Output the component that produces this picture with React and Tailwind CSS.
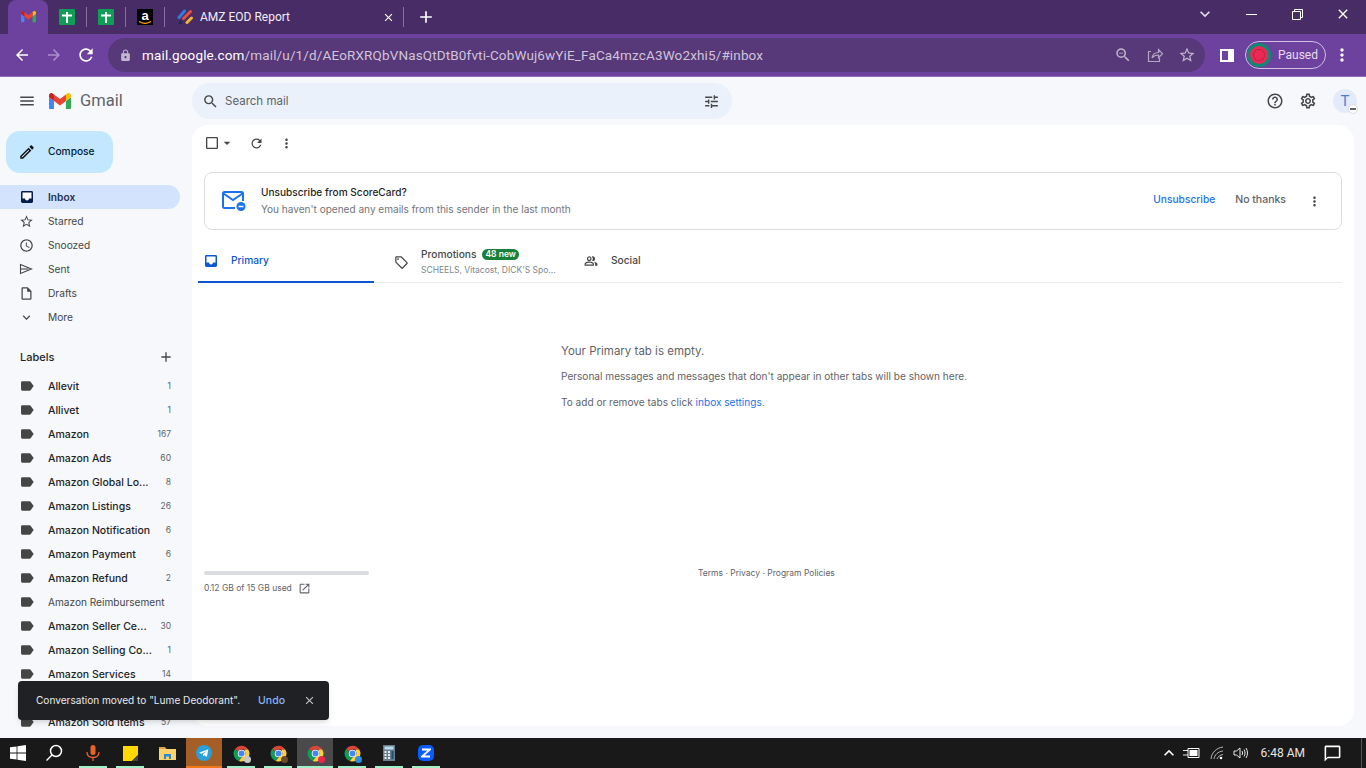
import React from "react";
import {
  MdAdd, MdArrowBack, MdArrowDropDown, MdArrowForward, MdCheckBoxOutlineBlank, MdClose, MdOutlineEdit,
  MdExpandMore, MdHelpOutline, MdLabel, MdLock, MdMenu, MdMoreVert, MdOpenInNew, MdOutlineAccessTime,
  MdOutlineInsertDriveFile, MdOutlineLocalOffer, MdOutlinePeopleAlt, MdOutlineSettings, MdRefresh,
  MdSearch, MdStarBorder, MdTune, MdZoomOut, MdKeyboardArrowUp, MdOutlineChatBubbleOutline,
} from "react-icons/md";

/* ---------- Logos ---------- */
const GmailLogo = ({ size = 22 }) => (
  <svg width={size} height={(size * 18) / 24} viewBox="0 0 24 18">
    <path fill="#4285f4" d="M1.6 18h3.8V8.8L0 4.7v11.7C0 17.3.7 18 1.6 18z" />
    <path fill="#34a853" d="M18.5 18h3.9c.9 0 1.6-.7 1.6-1.6V4.7l-5.5 4.1z" />
    <path fill="#fbbc04" d="M18.5 1.7v7.1L24 4.7V2.5c0-2-2.3-3.2-3.9-2z" />
    <path fill="#ea4335" d="M5.4 8.8V1.7L12 6.6l6.5-4.9v7.1L12 13.7z" />
    <path fill="#c5221f" d="M0 2.5v2.2l5.4 4.1V1.7L3.9.5C2.3-.7 0 .5 0 2.5z" />
  </svg>
);

const SheetIcon = () => (
  <div className="w-4 h-4 rounded-[1px] bg-[#0f9d58] flex items-center justify-center">
    <svg width="10" height="12" viewBox="0 0 10 12">
      <path fill="#fff" d="M4 1h2v2.500h4v2H6V12H4V5.500H0v-2h4z" />
    </svg>
  </div>
);

const AmazonIcon = () => (
  <div className="w-4 h-4 bg-black flex flex-col items-center overflow-hidden">
    <span className="text-white text-[13px] leading-[13px] font-bold font-['Liberation_Sans',sans-serif]">a</span>
    <svg width="14" height="3" viewBox="0 0 14 3" className="-mt-[1px]">
      <path d="M1 0.5c4 2.5 8 2.5 12 0" stroke="#f90" strokeWidth="1.3" fill="none" />
    </svg>
  </div>
);

const ReportLogo = () => (
  <svg width="16" height="16" viewBox="0 0 16 16">
    <path stroke="#2f7de1" strokeWidth="3" strokeLinecap="round" d="M2 8.5 7.5 2" />
    <path stroke="#e8503a" strokeWidth="3" strokeLinecap="round" d="M6.5 9.5 13.5 2.5" />
    <path stroke="#f5b335" strokeWidth="3" strokeLinecap="round" d="M10 13.5 14.5 9" />
    <path fill="#1c2a5a" d="M1 15l2.5-4L6 15z" />
  </svg>
);

const ChromeIcon = ({ badge }) => (
  <div className="relative w-[17px] h-[17px]">
    <svg width="17" height="17" viewBox="0 0 24 24">
      <path fill="#db4437" d="M12 1a11 11 0 0 1 9.5 5.5H12a5.5 5.5 0 0 0-5 3.2L3.2 5.2A11 11 0 0 1 12 1z" />
      <path fill="#0f9d58" d="M3.2 5.2 7 9.7a5.5 5.5 0 0 0 5 7.8l-3.6 5A11 11 0 0 1 3.2 5.2z" />
      <path fill="#ffcd40" d="M21.5 6.5A11 11 0 0 1 8.4 22.5l3.6-5a5.5 5.5 0 0 0 4.6-8.5l-.3-2.5z" />
      <circle cx="12" cy="12" r="5.4" fill="#fff" />
      <circle cx="12" cy="12" r="4.2" fill="#4285f4" />
    </svg>
    {badge && <span className={`absolute -right-[1px] -bottom-[1px] w-[7px] h-[7px] rounded-full ${badge}`} />}
  </div>
);

const Watermelon = () => (
  <div className="w-6 h-6 rounded-full bg-[#0d8a72] flex items-center justify-center">
    <div className="w-[18px] h-[18px] rounded-full bg-[#ea2a55] flex items-center justify-center">
      <div className="w-[12px] h-[12px] rounded-full border border-dotted border-[#8a1538]" />
    </div>
  </div>
);

const ShareIcon = () => (
  <svg width="18" height="18" viewBox="0 0 18 18" fill="none" stroke="#b3a5c4" strokeWidth="1.2">
    <path d="M5 5.5H2.5v10h11V12" />
    <path d="M6 12c.5-3.5 3-5.5 6.5-5.5V3.5l4 4.2-4 4V9C9.5 9 7.500 10 6 12z" />
  </svg>
);

const InboxFilled = ({ color, size = 16 }) => (
  <svg width={size} height={size} viewBox="0 0 16 16">
    <rect x="2" y="2" width="12" height="12" rx="1.4" fill={color} />
    <path fill="#fff" d="M3.500 3.500h9v6H10a2 2 0 0 1-4 0H3.500z" />
  </svg>
);

const SendOutline = () => (
  <svg width="14" height="14" viewBox="0 0 14 14" fill="none" stroke="#444746" strokeWidth="1.1">
    <path d="M1.500 2.500 12.500 7 1.500 11.500z" />
    <path d="M1.500 7h8" />
  </svg>
);

const UnsubIcon = () => (
  <svg width="26" height="22" viewBox="0 0 26 22" fill="none">
    <path stroke="#1a73e8" strokeWidth="2" d="M14 18H3.500A1.500 1.500 0 0 1 2 16.500v-13A1.500 1.500 0 0 1 3.500 2h17A1.500 1.500 0 0 1 22 3.500V11" />
    <path stroke="#1a73e8" strokeWidth="2" d="M2.500 3.500 12 10l9.500-6.500" />
    <circle cx="20" cy="16.500" r="4.500" fill="#1a73e8" />
    <path stroke="#fff" strokeWidth="1.500" d="M17.500 16.500h5" />
  </svg>
);

/* ---------- Taskbar icons ---------- */
const WindowsIcon = () => (
  <svg width="16" height="16" viewBox="0 0 16 16">
    <path fill="#fff" d="M0 2.300 6.600 1.400v6.200H0zM7.400 1.300 16 0v7.600H7.400zM0 8.400h6.600v6.200L0 13.700zM7.400 8.400H16V16l-8.600-1.200z" />
  </svg>
);

const SearchTask = () => (
  <svg width="18" height="18" viewBox="0 0 18 18" fill="none" stroke="#fff" strokeWidth="1.500">
    <circle cx="11" cy="7" r="5.500" />
    <path d="M7 11 1.500 16.500" />
  </svg>
);

const MicIcon = () => (
  <svg width="14" height="18" viewBox="0 0 14 18" fill="none">
    <rect x="4.500" y="1" width="5" height="10" rx="2.500" fill="#e8622a" />
    <path stroke="#e8622a" strokeWidth="1.300" d="M1 8c0 3.500 2.500 5.500 6 5.500s6-2 6-5.500M7 13.500V17" />
  </svg>
);

const StickyIcon = () => (
  <svg width="15" height="15" viewBox="0 0 15 15">
    <path fill="#ffd800" d="M0 0h15v9l-6 6H0z" />
    <path fill="#444" d="M15 9v6H9z" />
  </svg>
);

const FolderIcon = () => (
  <svg width="17" height="15" viewBox="0 0 17 15">
    <path fill="#d9a441" d="M0 1h6l1.500 2H0z" />
    <path fill="#fcd36a" d="M0 3h17v11H0z" />
    <path fill="#2b88d8" d="M5 8h7v5h-2v-2.500H7V13H5z" />
  </svg>
);

const TelegramIcon = () => (
  <svg width="16" height="16" viewBox="0 0 16 16">
    <circle cx="8" cy="8" r="8" fill="#2a9fd8" />
    <path fill="#fff" d="M3 7.800 12.300 4.200 10.900 12 8.400 10.200 7 11.500 6.800 9.300 11 5.600 5.600 8.800z" />
  </svg>
);

const CalcIcon = () => (
  <svg width="12" height="16" viewBox="0 0 12 16">
    <rect width="12" height="16" fill="#6b7c8c" />
    <rect x="1.500" y="1.500" width="9" height="3" fill="#b8dcf0" />
    <path fill="#e6edf2" d="M1.500 6h2v2h-2zM5 6h2v2H5zM1.500 9h2v2h-2zM5 9h2v2H5zM1.500 12h2v2h-2zM5 12h2v2H5z" />
    <rect x="8.500" y="6" width="2" height="8" fill="#20506f" />
  </svg>
);

const ZoomIcon = () => (
  <div className="w-4 h-4 rounded-[5px] bg-[#0b5cff] flex items-center justify-center">
    <svg width="10" height="10" viewBox="0 0 10 10">
      <path fill="none" stroke="#fff" strokeWidth="1.800" d="M1 1.500h8L1 8.500h8" />
    </svg>
  </div>
);

const BatteryPlug = () => (
  <svg width="18" height="12" viewBox="0 0 18 12" fill="none" stroke="#fff">
    <path d="M5 1.500h11v9H5z" />
    <rect x="6.500" y="3" width="8" height="6" fill="#fff" stroke="none" />
    <path d="M0 3.500h5M0 8h5" strokeWidth="0.900" />
  </svg>
);

const WifiIcon = () => (
  <svg width="14" height="14" viewBox="0 0 14 14" fill="none" stroke="#c8c8c8" strokeWidth="0.900">
    <path d="M1 13C1.500 7 6 2 13 1M4 13c.5-4 4-7.500 9-8M7 13c.5-2 3-4 6-4.500" />
    <circle cx="11" cy="12" r="1.300" fill="#fff" stroke="none" />
  </svg>
);

const VolumeIcon = () => (
  <svg width="16" height="14" viewBox="0 0 16 14" fill="none" stroke="#fff" strokeWidth="0.900">
    <path d="M1 5v4h2.500L7 12V2L3.500 5z" />
    <path d="M9 5c.8 1.200.8 2.800 0 4M11 3.500c1.400 2 1.400 5 0 7M13 2c2 3 2 7 0 10" />
  </svg>
);

/* ---------- Data ---------- */
const nav = [
  { name: "Inbox", icon: <InboxFilled color="#041e49" />, active: true },
  { name: "Starred", icon: <MdStarBorder size={15} color="#444746" /> },
  { name: "Snoozed", icon: <MdOutlineAccessTime size={15} color="#444746" /> },
  { name: "Sent", icon: <SendOutline /> },
  { name: "Drafts", icon: <MdOutlineInsertDriveFile size={15} color="#444746" /> },
  { name: "More", icon: <MdExpandMore size={15} color="#444746" /> },
];

const labels = [
  ["Allevit", "1"],
  ["Allivet", "1"],
  ["Amazon", "167"],
  ["Amazon Ads", "60"],
  ["Amazon Global Lo...", "8"],
  ["Amazon Listings", "26"],
  ["Amazon Notification", "6"],
  ["Amazon Payment", "6"],
  ["Amazon Refund", "2"],
  ["Amazon Reimbursement", "", true],
  ["Amazon Seller Ce...", "30"],
  ["Amazon Selling Co...", "1"],
  ["Amazon Services", "14"],
  ["", ""], // this row sits under the toast
  ["Amazon Sold Items", "57"],
];

const taskItems = [
  { icon: <MicIcon />, bar: "left-[4px] right-[4px] bg-[#a0f0c8]" },
  { icon: <StickyIcon />, bar: "left-[4px] right-[4px] bg-[#a0f0c8]" },
  { icon: <FolderIcon /> },
  { icon: <TelegramIcon />, cls: "bg-[#a55e26]", bar: "left-0 right-0 bg-[#f07818]" },
  { icon: <ChromeIcon badge="bg-[#c9c9c9]" />, bar: "left-[4px] right-[4px] bg-[#a0f0c8]" },
  { icon: <ChromeIcon badge="bg-[#6b4a2a]" />, bar: "left-[4px] right-[4px] bg-[#a0f0c8]" },
  { icon: <ChromeIcon badge="bg-[#e8274f]" />, cls: "bg-[#4a4a4a]", bar: "left-0 right-0 bg-[#a0f0c8]" },
  { icon: <ChromeIcon badge="bg-[#2a8fe0]" />, bar: "left-[4px] right-[4px] bg-[#a0f0c8]" },
  { icon: <CalcIcon />, bar: "left-[4px] right-[4px] bg-[#a0f0c8]" },
  { icon: <ZoomIcon />, bar: "left-[4px] right-[4px] bg-[#a0f0c8]" },
];

/* ---------- Sections ---------- */
const TabBar = () => (
  <div className="h-[34px] bg-[#472c66] flex items-stretch pl-[8px] text-white">
    <div className="w-[40px] bg-[#6d429f] rounded-t-[8px] flex items-center justify-center">
      <GmailLogo size={15} />
    </div>
    <div className="w-[38px] flex items-center justify-center"><SheetIcon /></div>
    <div className="w-[1px] h-[20px] mt-[7px] bg-[#86709f]" />
    <div className="w-[38px] flex items-center justify-center"><SheetIcon /></div>
    <div className="w-[1px] h-[20px] mt-[7px] bg-[#86709f]" />
    <div className="w-[38px] flex items-center justify-center"><AmazonIcon /></div>
    <div className="w-[1px] h-[20px] mt-[7px] bg-[#86709f]" />
    <div className="w-[238px] flex items-center pl-[12px]">
      <ReportLogo />
      <span className="ml-[7px] text-[12px] text-[#f1ecf6]">AMZ EOD Report</span>
      <MdClose size={13} className="ml-auto mr-[8px]" />
    </div>
    <div className="w-[1px] h-[20px] mt-[7px] bg-[#86709f]" />
    <div className="w-[44px] flex items-center justify-center"><MdAdd size={20} /></div>
    <div className="ml-auto flex items-center pb-[6px]">
      <div className="w-[46px] flex justify-center"><MdExpandMore size={20} className="text-[#e4dcec]" /></div>
      <div className="w-[46px] flex justify-center">
        <div className="w-[11px] h-[1px] bg-white" />
      </div>
      <div className="w-[46px] flex justify-center">
        <svg width="11" height="11" viewBox="0 0 11 11" fill="none" stroke="#fff">
          <path d="M.5 2.500h8v8h-8zM2.500 2.500v-2h8v8h-2" />
        </svg>
      </div>
      <div className="w-[46px] flex justify-center"><MdClose size={16} /></div>
    </div>
  </div>
);

const AddressBar = () => (
  <div className="h-[43px] bg-[#6d429f] border-b border-[#8f6db8] flex items-center">
    <div className="w-[108px] flex items-center text-white">
      <div className="w-[44px] flex justify-center"><MdArrowBack size={18} /></div>
      <div className="w-[20px] flex justify-center"><MdArrowForward size={18} className="text-[#ab90ca]" /></div>
      <div className="w-[44px] flex justify-center"><MdRefresh size={20} /></div>
    </div>
    <div className="w-[1097px] h-[34px] rounded-full bg-[#573878] flex items-center pl-[11px] pr-[9px]">
      <MdLock size={13} className="text-[#c2b5d0]" />
      <span className="ml-[10px] text-[13.5px] tracking-[0.14px] text-[#cfc4da]">
        <span className="text-white">mail.google.com</span>/mail/u/1/d/AEoRXRQbVNasQtDtB0fvti-CobWuj6wYiE_FaCa4mzcA3Wo2xhi5/#inbox
      </span>
      <div className="ml-auto flex items-center gap-[14px] text-[#c2b5d0]">
        <MdZoomOut size={18} />
        <ShareIcon />
        <MdStarBorder size={18} />
      </div>
    </div>
    <div className="ml-[15px] w-[14px] h-[13px] border-[2px] border-white border-r-[6px] bg-transparent" />
    <div className="ml-[11px] w-[81px] h-[28px] rounded-full border border-[#cfc0e4] flex items-center pl-[1px]">
      <Watermelon />
      <span className="ml-[7px] text-[12px] text-[#e6dcf2]">Paused</span>
    </div>
    <MdMoreVert size={20} className="ml-[6px] text-white" />
  </div>
);

const GmailHeader = () => (
  <div className="h-[48px] flex items-center">
    <div className="w-[192px] flex items-center">
      <MdMenu size={18} className="ml-[18px] text-[#444746]" />
      <div className="ml-[13px]"><GmailLogo /></div>
      <span className="ml-[9px] text-[16.5px] text-[#5f6368]">Gmail</span>
    </div>
    <div className="w-[540px] h-[36px] rounded-full bg-[#eaf1fb] flex items-center pl-[10px] pr-[12px]">
      <MdSearch size={17} className="text-[#444746]" />
      <span className="ml-[6px] mt-[1px] text-[11.5px] text-[#5f6368] font-['Inter',sans-serif]">Search mail</span>
      <MdTune size={17} className="ml-auto text-[#444746]" />
    </div>
    <div className="ml-auto flex items-center pr-[9px]">
      <MdHelpOutline size={18} className="text-[#444746]" />
      <MdOutlineSettings size={18} className="ml-[15px] text-[#444746]" />
      <div className="relative ml-[16px] w-[24px] h-[24px] rounded-full bg-[#e3ebfa] flex items-center justify-center">
        <span className="text-[15px] text-[#4a7fd8]">T</span>
        <span className="absolute -right-[1px] -bottom-[1px] w-[10px] h-[10px] rounded-full bg-white border border-[#dadce0] flex items-center justify-center">
          <span className="w-[6px] h-[2px] bg-[#5f6368]" />
        </span>
      </div>
    </div>
  </div>
);

const Sidebar = () => (
  <aside className="w-[192px] shrink-0 h-[613px] overflow-hidden font-['Inter',sans-serif]">
    <div className="ml-[6px] mt-[6px] w-[107px] h-[42px] rounded-[14px] bg-[#c2e7ff] flex items-center pl-[12px]">
      <MdOutlineEdit size={18} className="text-[#111]" />
      <span className="ml-[12px] mb-[1px] text-[10.2px] font-medium text-[#001d35]">Compose</span>
    </div>
    <nav className="mt-[12px]">
      {nav.map((item) => (
        <div
          key={item.name}
          className={`w-[180px] h-[24px] rounded-r-full flex items-center ${item.active ? "bg-[#d3e3fd]" : ""}`}
        >
          <div className="w-[48px] pl-[19px] flex items-center">{item.icon}</div>
          <span className={`mt-[1px] text-[10.2px] ${item.active ? "font-semibold text-[#1f3050]" : "text-[#444746]"}`}>{item.name}</span>
        </div>
      ))}
    </nav>
    <div className="mt-[12px] h-[32px] w-[180px] flex items-center justify-between pl-[20px] pr-[6px]">
      <span className="text-[11px] font-medium text-[#1f1f1f]">Labels</span>
      <MdAdd size={16} className="text-[#444746]" />
    </div>
    <ul className="mt-[1px]">
      {labels.map(([name, count, read], i) => (
        <li key={i} className="w-[180px] h-[24px] flex items-center">
          <div className="w-[48px] pl-[20px]"><MdLabel size={16} className="-ml-[1px] text-[#444746]" /></div>
          <span className={`mt-[1px] whitespace-nowrap ${read ? "text-[10.1px] text-[#444746]" : "text-[10.5px] font-medium text-[#1f1f1f]"}`}>{name}</span>
          <span className="ml-auto mt-[1px] pr-[9px] text-[8.5px] text-[#5f6368]">{count}</span>
        </li>
      ))}
    </ul>
  </aside>
);

const Tabs = () => (
  <div className="ml-[6px] mr-[12px] h-[46px] border-b border-[#e8eaed] flex">
    <div className="relative w-[176px] flex items-center pl-[5px] pt-[3px]">
      <InboxFilled color="#0b57d0" />
      <span className="ml-[12px] text-[10.2px] font-medium text-[#0b57d0]">Primary</span>
      <div className="absolute left-0 right-0 -bottom-[1px] h-[2px] bg-[#0b57d0]" />
    </div>
    <div className="w-[199px] flex items-center pl-[20px] pt-[5px]">
      <MdOutlineLocalOffer size={15} className="text-[#444746]" />
      <div className="ml-[12px]">
        <div className="flex items-center">
          <span className="text-[10.2px] font-medium text-[#444746]">Promotions</span>
          <span className="ml-[6px] h-[11px] px-[3px] rounded-full bg-[#188038] text-white text-[8.5px] leading-[11px] font-semibold">48 new</span>
        </div>
        <div className="mt-[2px] text-[8.5px] text-[#80868b]">SCHEELS, Vitacost, DICK'S Spo...</div>
      </div>
    </div>
    <div className="flex items-center pl-[11px] pt-[3px]">
      <MdOutlinePeopleAlt size={14} className="text-[#444746]" />
      <span className="ml-[13px] text-[10.2px] font-medium text-[#444746]">Social</span>
    </div>
  </div>
);

const MainPanel = () => (
  <main className="flex-1 mr-[12px] h-[601px] bg-white rounded-[16px] overflow-hidden font-['Inter',sans-serif]">
    <div className="h-[36px] flex items-center pl-[12px] text-[#444746]">
      <MdCheckBoxOutlineBlank size={16} />
      <MdArrowDropDown size={16} className="-ml-[1px]" />
      <MdRefresh size={15} className="ml-[14px]" />
      <MdMoreVert size={15} className="ml-[15px]" />
    </div>
    <div className="mt-[11px] mx-[12px] h-[58px] border border-[#dadce0] rounded-[8px] flex items-center pl-[16px] pr-[19px]">
      <UnsubIcon />
      <div className="ml-[14px]">
        <div className="text-[10.1px] font-medium text-[#1f1f1f]">Unsubscribe from ScoreCard?</div>
        <div className="mt-[2px] text-[10.05px] text-[#70757a]">You haven't opened any emails from this sender in the last month</div>
      </div>
      <span className="ml-auto mb-[3px] text-[10.2px] font-medium text-[#1a73e8]">Unsubscribe</span>
      <span className="ml-[20px] mb-[3px] text-[10.5px] font-medium text-[#5f6368]">No thanks</span>
      <MdMoreVert size={15} className="ml-[21px] text-[#444746]" />
    </div>
    <div className="mt-[7px]"><Tabs /></div>
    <div className="h-[288px] pl-[369px] pt-[60px]">
      <div className="text-[11.5px] text-[#5f6368]">Your Primary tab is empty.</div>
      <div className="mt-[9px] text-[10.08px] text-[#5f6368]">
        Personal messages and messages that don't appear in other tabs will be shown here.
      </div>
      <div className="mt-[11px] text-[10.08px] text-[#5f6368]">
        To add or remove tabs click <span className="text-[#1a73e8]">inbox settings</span>.
      </div>
    </div>
    <div className="pl-[12px] flex items-start">
      <div className="w-[165px]">
        <div className="h-[4px] rounded-full bg-[#dadce0]" />
        <div className="mt-[7px] flex items-center">
          <span className="text-[8.5px] text-[#5f6368]">0.12 GB of 15 GB used</span>
          <MdOpenInNew size={13} className="ml-[6px] text-[#5f6368]" />
        </div>
      </div>
      <div className="ml-[329px] -mt-[4px] text-[8.5px] text-[#5f6368]">Terms · Privacy · Program Policies</div>
    </div>
  </main>
);

const Toast = () => (
  <div className="absolute left-[18px] bottom-[48px] w-[311px] h-[39px] bg-[#202124] rounded-[4px] shadow-md flex items-center pl-[18px] pr-[13px] font-['Inter',sans-serif]">
    <span className="text-[10.1px] text-[#e8eaed]">Conversation moved to "Lume Deodorant".</span>
    <span className="ml-auto text-[10.5px] font-medium text-[#8ab4f8]">Undo</span>
    <MdClose size={13} className="ml-[18px] text-[#c4c7c5]" />
  </div>
);

const Taskbar = () => (
  <footer className="h-[30px] bg-[#191919] flex items-stretch text-white">
    <div className="w-[36px] flex items-center justify-center"><WindowsIcon /></div>
    <div className="w-[39px] pr-[3px] flex items-center justify-center"><SearchTask /></div>
    {taskItems.map((item, i) => (
      <div key={i} className={`relative w-[36px] mr-[1px] flex items-center justify-center ${item.cls || ""}`}>
        {item.icon}
        {item.bar && <div className={`absolute bottom-0 h-[2px] ${item.bar}`} />}
      </div>
    ))}
    <div className="ml-auto flex items-center">
      <MdKeyboardArrowUp size={20} />
      <div className="ml-[4px]"><BatteryPlug /></div>
      <div className="ml-[9px]"><WifiIcon /></div>
      <div className="ml-[9px]"><VolumeIcon /></div>
      <span className="ml-[12px] text-[12px] text-[#e6e6e6]">6:48 AM</span>
      <MdOutlineChatBubbleOutline size={19} className="ml-[18px]" />
      <div className="ml-[19px] mr-[4px] w-[1px] h-[30px] bg-[#555]" />
    </div>
  </footer>
);

export default function App() {
  return (
    <div className="relative w-[1366px] h-[768px] overflow-hidden bg-[#f6f8fc] font-['Roboto',sans-serif]">
      <TabBar />
      <AddressBar />
      <GmailHeader />
      <div className="flex h-[613px]">
        <Sidebar />
        <MainPanel />
      </div>
      <Taskbar />
      <Toast />
    </div>
  );
}
